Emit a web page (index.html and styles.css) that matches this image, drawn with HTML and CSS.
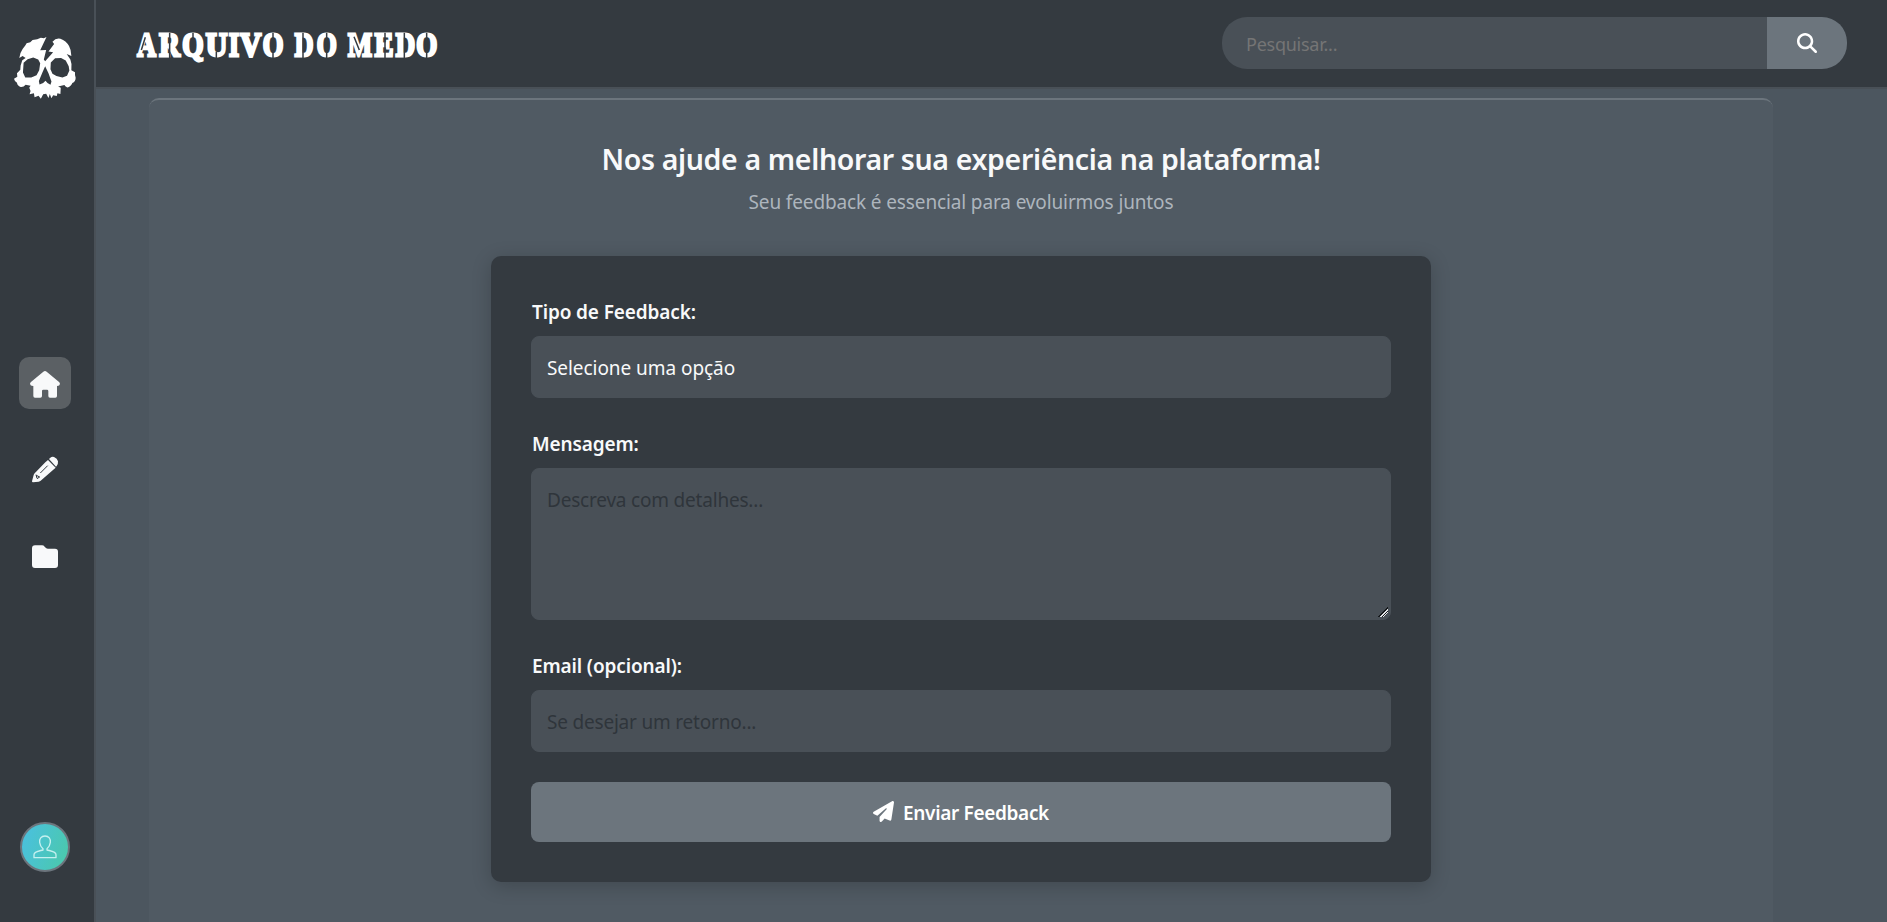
FILE: index.html
```html
<!DOCTYPE html>
<html lang="pt-BR">
<head>
<meta charset="utf-8">
<title>Arquivo do Medo</title>
<link rel="stylesheet" href="styles.css">
</head>
<body>
<div class="app">
  <aside class="sidebar">
    <svg class="skull" viewBox="42 51 187 187" aria-label="Logo">
      <path fill="#fff" fill-rule="evenodd" d="M140 51L121 91L139 90L132 119L136 124L160 97L146 95L163 72L158 65Q168 53 182 56Q199 62 208 78Q215 90 215 108L201 102L212 119Q218 133 215 151L226 157Q225 165 228 174Q228 186 218 190Q213 202 203 203Q197 202 194 196L175 200L183 204L182 223L173 221L171 229L160 227L155 236L150 223L146 235L139 222L130 224L123 237L116 228L104 233L102 221L89 224L92 214L88 204L92 198L77 195Q71 203 62 202Q52 198 51 189Q43 184 42 177L52 171L51 160L61 150L62 137L67 121L77 114L68 108L58 114Q60 98 68 87L76 77L80 70L91 67L98 60L112 58L123 53L132 55ZM71 129L83 118L100 113L115 119L121 130L118 151L110 166L94 173L76 173L69 158ZM152 148L153 128L166 115L184 114L198 122L207 139L209 152L202 168L188 173L170 169L158 162ZM136 139L128 157L117 184L119 194L130 190L137 183L143 190L152 195L155 185L146 160Z"/>
    </svg>
    <nav class="nav">
      <a class="nav-item active" aria-label="Início">
        <svg viewBox="57 51 156 156"><path fill="#f8f9fa" d="M130 95.500Q135 91 140 95.500L178 127Q182 132 178 136Q176 138 171 138V168Q171 173 166 173H150Q145 173 145 168V153Q145 149 141 149H130Q126 149 126 153V168Q126 173 121 173H105Q100 173 100 168V138Q94 138 92 136Q88 132 92 127Z"/></svg>
      </a>
      <a class="nav-item" aria-label="Escrever">
        <svg viewBox="57 311 156 156"><path fill="#f8f9fa" d="M136 366L144 359L167 382L159 389L122 421Q120 423 116 424L99 426Q96 426 96 423L101 404Q102 401 104 399ZM147 356L151 352Q156 348 162 350Q172 354 174 363Q175 370 170 377L168 379Z"/><path d="M121 398L143 376M108 403L111 414M109 405L119 410L111 415" fill="none" stroke="#343a40" stroke-width="3"/></svg>
      </a>
      <a class="nav-item" aria-label="Arquivos">
        <svg viewBox="57 573 156 156"><path fill="#f8f9fa" d="M105 616H126Q131 616 134 620L138 624Q140 626 144 626H165Q174 626 174 635V675Q174 684 165 684H105Q96 684 96 675V625Q96 616 105 616Z"/></svg>
      </a>
    </nav>
    <div class="avatar">
      <svg viewBox="60 66 150 150"><path d="M135 108C123 108 118 117 119 127C120 136 124 142 129 146V150C117 153 102 154 102 164V173H168V164C168 154 153 153 141 150V146C146 142 150 136 151 127C152 117 147 108 135 108Z"/></svg>
    </div>
  </aside>
  <div class="main">
    <header class="header">
      <svg class="brand" viewBox="105 60 912 150" aria-label="Arquivo do Medo">
        <g class="brand-letters">
          <text x="112" y="168" textLength="56" lengthAdjust="spacingAndGlyphs">A</text>
          <text x="178" y="168" textLength="62" lengthAdjust="spacingAndGlyphs">R</text>
          <text x="247" y="168" textLength="64" lengthAdjust="spacingAndGlyphs">Q</text>
          <text x="317" y="168" textLength="65" lengthAdjust="spacingAndGlyphs">U</text>
          <text x="387" y="168" textLength="30" lengthAdjust="spacingAndGlyphs">I</text>
          <text x="421" y="168" textLength="63" lengthAdjust="spacingAndGlyphs">V</text>
          <text x="488" y="168" textLength="62" lengthAdjust="spacingAndGlyphs">O</text>
          <text x="584" y="168" textLength="56" lengthAdjust="spacingAndGlyphs">D</text>
          <text x="650" y="168" textLength="60" lengthAdjust="spacingAndGlyphs">O</text>
          <text x="744" y="168" textLength="72" lengthAdjust="spacingAndGlyphs">M</text>
          <text x="824" y="168" textLength="56" lengthAdjust="spacingAndGlyphs">E</text>
          <text x="887" y="168" textLength="58" lengthAdjust="spacingAndGlyphs">D</text>
          <text x="949" y="168" textLength="63" lengthAdjust="spacingAndGlyphs">O</text>
        </g>
        <path class="brand-cuts" d="M124 150L136 112M209 98V175M279 98V160M349 155V175M519 98V175M609 98V175M680 98V175M762 110L778 150M855 98V175M913 98V175M980 98V175"/>
      </svg>
      <form class="search">
        <input class="search-input" type="text" placeholder="Pesquisar...">
        <button class="search-button" type="button" aria-label="Pesquisar">
          <svg viewBox="0 0 512 512"><path fill="#fff" d="M416 208c0 45.900-14.900 88.300-40 122.700L502.600 457.400c12.500 12.500 12.500 32.800 0 45.300s-32.800 12.500-45.300 0L330.700 376c-34.400 25.200-76.800 40-122.700 40C93.100 416 0 322.900 0 208S93.100 0 208 0S416 93.100 416 208zM208 352a144 144 0 1 0 0-288 144 144 0 1 0 0 288z"/></svg>
        </button>
      </form>
    </header>
    <main class="content">
      <section class="panel">
        <h1 class="title">Nos ajude a melhorar sua experiência na plataforma!</h1>
        <p class="subtitle">Seu feedback é essencial para evoluirmos juntos</p>
        <form class="card">
          <label class="label" for="tipo">Tipo de Feedback:</label>
          <select class="field select" id="tipo"><option>Selecione uma opção</option></select>
          <label class="label" for="mensagem">Mensagem:</label>
          <textarea class="field message" id="mensagem" placeholder="Descreva com detalhes..."></textarea>
          <label class="label" for="email">Email (opcional):</label>
          <input class="field email" id="email" type="email" placeholder="Se desejar um retorno...">
          <button class="submit" type="button">
            <svg viewBox="0 0 512 512"><path fill="#fff" d="M498.100 5.600c10.100 7 15.400 19.100 13.500 31.200l-64 416c-1.500 9.700-7.400 18.200-16 23s-18.900 5.400-28 1.600L284 427.700l-68.500 74.100c-8.900 9.700-22.900 12.900-35.200 8.100S160 493.200 160 480V396.400c0-4 1.500-7.800 4.200-10.700L331.800 202.800c5.800-6.300 5.600-16-.4-22s-15.700-6.400-22-.7L106 360.800 17.700 316.600C7.100 311.300 .3 300.700 0 288.900s5.900-22.800 16.100-28.700l448-256c10.700-6.100 23.900-5.500 34 1.400z"/></svg>
            <span>Enviar Feedback</span>
          </button>
        </form>
      </section>
    </main>
  </div>
</div>
</body>
</html>
```

FILE: styles.css
```css
* { box-sizing: border-box; }

body {
  margin: 0;
  height: 922px;
  overflow: hidden;
  background: #4c565f;
  color: #f8f9fa;
  font-family: "Segoe UI", "Noto Sans", sans-serif;
}

.app { display: flex; height: 922px; }

.sidebar {
  width: 96px;
  flex: none;
  display: flex;
  flex-direction: column;
  align-items: center;
  padding: 37px 4px 50px 0;
  background: #343a40;
  border-right: 2px solid #495057;
}

.skull { width: 62px; height: 62px; }

.nav {
  display: flex;
  flex-direction: column;
  gap: 35px;
  margin: 258px 0 auto;
}

.nav-item { width: 52px; height: 52px; border-radius: 10px; }
.nav-item svg { display: block; width: 52px; height: 52px; }
.nav-item.active { background: #5b6064; }

.avatar {
  width: 50px;
  height: 50px;
  border: 2px solid #6c757d;
  border-radius: 50%;
  background: linear-gradient(110deg, #4ac0e2, #4bc9a8);
}
.avatar svg { display: block; width: 50px; height: 50px; margin: -2px; }
.avatar path { fill: none; stroke: #c4f0ef; stroke-width: 4; stroke-linejoin: round; }

.main { flex: 1; min-width: 0; display: flex; flex-direction: column; }

.header {
  height: 89px;
  flex: none;
  display: flex;
  justify-content: space-between;
  align-items: center;
  padding: 0 40px 1px 39px;
  background: #343a40;
  border-bottom: 2px solid #495057;
}

.brand { width: 304px; height: 50px; margin-top: 4px; overflow: visible; }
.brand-letters {
  font: bold 101px "Liberation Serif", serif;
  fill: #fff;
  stroke: #fff;
  stroke-width: 8.5px;
}
.brand-cuts { fill: none; stroke: #343a40; stroke-width: 4.5; }

.search {
  display: flex;
  width: 625px;
  height: 52px;
  border-radius: 25px;
  overflow: hidden;
}
.search-input {
  flex: 1;
  min-width: 0;
  padding: 2px 24px 0;
  border: 0;
  background: #495057;
  font: 18px "Segoe UI", "Noto Sans", sans-serif;
  letter-spacing: -0.25px;
  color: #fff;
}
.search-input::placeholder { color: #757575; }
.search-button {
  display: flex;
  align-items: center;
  justify-content: center;
  width: 80px;
  padding: 0;
  border: 0;
  background: #6c757d;
}
.search-button svg { width: 20px; height: 20px; }

.content { flex: 1; display: flex; padding: 9px 114px 0 53px; }

.panel {
  flex: 1;
  display: flex;
  flex-direction: column;
  align-items: center;
  padding-top: 38px;
  background: #505a63;
  border-top: 2px solid #6c757d;
  border-radius: 10px 10px 0 0;
}

.title {
  margin: 0;
  font-size: 28.5px;
  line-height: 42px;
  font-weight: 600;
  letter-spacing: -0.35px;
  white-space: nowrap;
}
.subtitle {
  margin: 7px 0 38px;
  font-size: 19px;
  line-height: 31px;
  letter-spacing: -0.13px;
  color: #adb5bd;
}

.card {
  display: flex;
  flex-direction: column;
  width: 940px;
  height: 626px;
  flex: none;
  padding: 40px;
  border-radius: 10px;
  background: #343a40;
  box-shadow: 0 4px 20px rgba(0, 0, 0, 0.2);
}
.label {
  height: 30px;
  margin-bottom: 10px;
  padding-left: 1px;
  font-size: 19px;
  line-height: 32px;
  font-weight: 600;
  letter-spacing: -0.13px;
}
.field {
  display: block;
  width: 100%;
  height: 62px;
  margin: 0 0 30px;
  padding: 16px 15px;
  border: 1px solid #495057;
  border-radius: 8px;
  outline: 0;
  background: #495057;
  color: #f8f9fa;
  font: 19px/30px "Segoe UI", "Noto Sans", sans-serif;
  letter-spacing: -0.2px;
}
.field::placeholder { color: #2f353b; }
.select { appearance: none; letter-spacing: -0.06px; }
.message { height: 152px; resize: vertical; }
.message::-webkit-resizer {
  background: linear-gradient(135deg, transparent 60%, #16191c 60% 66%, #e4e6e8 66% 74%, #16191c 74% 79%, #e4e6e8 79% 84%, transparent 84%) 0 0 / 13px 13px no-repeat;
}
.email { padding: 17px 15px 15px; }

.submit {
  display: flex;
  align-items: center;
  justify-content: center;
  gap: 9px;
  height: 60px;
  padding: 2px 0 0;
  border: 0;
  border-radius: 8px;
  background: #6c757d;
  color: #fff;
  font: 600 19px "Segoe UI", "Noto Sans", sans-serif;
  letter-spacing: -0.33px;
}
.submit svg { width: 21px; height: 21px; margin-top: -3px; }
```
